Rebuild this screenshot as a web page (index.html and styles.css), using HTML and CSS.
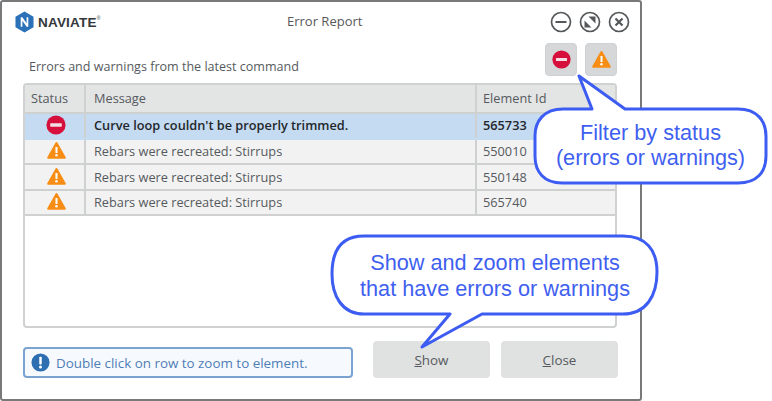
FILE: index.html
```html
<!DOCTYPE html>
<html lang="en">
<head>
<meta charset="utf-8">
<title>Error Report</title>
<link rel="stylesheet" href="styles.css">
</head>
<body>
<svg class="defs" width="0" height="0" aria-hidden="true">
  <symbol id="err" viewBox="0 0 20 20">
    <circle cx="10" cy="10" r="9.6" fill="#d60f3c"/>
    <rect x="4.2" y="8.3" width="11.6" height="3.4" rx=".6" fill="#f4dfe2"/>
  </symbol>
  <symbol id="warn" viewBox="0 0 20 18">
    <path d="M10 1.2 L18.8 16.6 H1.2 Z" fill="#f78d14" stroke="#f78d14" stroke-width="2.2" stroke-linejoin="round"/>
    <rect x="8.9" y="5.2" width="2.2" height="6.4" rx=".6" fill="#fff"/>
    <circle cx="10" cy="14" r="1.3" fill="#fff"/>
  </symbol>
</svg>
<main class="window">
  <header class="titlebar">
    <div class="logo">
      <svg class="logo-mark" viewBox="0 0 20 23" aria-hidden="true">
        <path d="M10 .5 19.5 6v11L10 22.5.5 17V6Z" fill="#2a71b8"/>
        <path d="M6 16.5v-10h1.8l4.4 6.4V6.500H14v10h-1.800L7.800 10.100v6.400Z" fill="#fff"/>
      </svg>
      <span class="logo-text">NAVIATE<sup class="reg">®</sup></span>
    </div>
    <h1 class="title">Error Report</h1>
    <div class="win-btns">
      <svg class="win-btn" viewBox="0 0 22 22" aria-hidden="true"><circle cx="11" cy="11" r="9.500"/><path d="M5.500 11h11" stroke-width="2"/></svg>
      <svg class="win-btn" viewBox="0 0 22 22" aria-hidden="true"><circle cx="11" cy="11" r="9.500"/><path d="M9.500 5.500h7v7ZM5.500 9.500l7 7h-7Z" class="solid"/></svg>
      <svg class="win-btn" viewBox="0 0 22 22" aria-hidden="true"><circle cx="11" cy="11" r="9.500"/><path d="M7.500 7.500l7 7M14.500 7.500l-7 7" stroke-width="2.200"/></svg>
    </div>
  </header>
  <div class="toolbar">
    <p class="lead">Errors and warnings from the latest command</p>
    <div class="filters">
      <button class="filter" type="button" aria-label="Errors"><svg class="filter-err"><use href="#err"/></svg></button>
      <button class="filter" type="button" aria-label="Warnings"><svg class="filter-warn"><use href="#warn"/></svg></button>
    </div>
  </div>
  <section class="table-box">
    <table class="grid">
      <colgroup><col class="c-status"><col class="c-msg"><col class="c-id"></colgroup>
      <thead>
        <tr><th>Status</th><th>Message</th><th>Element Id</th></tr>
      </thead>
      <tbody>
        <tr class="selected"><td class="ic"><svg class="row-err"><use href="#err"/></svg></td><td>Curve loop couldn't be properly trimmed.</td><td>565733</td></tr>
        <tr><td class="ic"><svg class="row-warn"><use href="#warn"/></svg></td><td>Rebars were recreated: Stirrups</td><td>550010</td></tr>
        <tr><td class="ic"><svg class="row-warn"><use href="#warn"/></svg></td><td>Rebars were recreated: Stirrups</td><td>550148</td></tr>
        <tr><td class="ic"><svg class="row-warn"><use href="#warn"/></svg></td><td>Rebars were recreated: Stirrups</td><td>565740</td></tr>
      </tbody>
    </table>
  </section>
  <footer class="footer">
    <div class="hint">
      <svg class="hint-icon" viewBox="0 0 20 20" aria-hidden="true"><circle cx="10" cy="10" r="9.500" fill="#2d6fb0"/><rect x="8.700" y="4" width="2.600" height="8" rx=".8" fill="#fff"/><circle cx="10" cy="14.800" r="1.600" fill="#fff"/></svg>
      <span>Double click on row to zoom to element.</span>
    </div>
    <button class="action" type="button"><u>S</u>how</button>
    <button class="action" type="button"><u>C</u>lose</button>
  </footer>
</main>

<aside class="callout callout-filter">
  <svg class="bubble" viewBox="0 0 240 112" aria-hidden="true">
    <path d="M31 35 H60 L47 2 L93 35 H206 C225 35 234 47 234 62 V82 C234 98 225 109 206 109 H30 C12 109 3 98 3 82 V62 C3 47 12 35 31 35 Z"/>
  </svg>
  <p class="callout-text">Filter by status<br>(errors or warnings)</p>
</aside>
<aside class="callout callout-show">
  <svg class="bubble" viewBox="0 0 330 116" aria-hidden="true">
    <path d="M34 2 H293 C316 2 327 16 327 38 C327 62 316 80 293 80 H152 L92 113 L120 80 H34 C12 80 2 62 2 40 C2 16 12 2 34 2 Z"/>
  </svg>
  <p class="callout-text">Show and zoom elements<br>that have errors or warnings</p>
</aside>
</body>
</html>
```
FILE: styles.css
```css
* { box-sizing: border-box; }
html, body { margin: 0; padding: 0; }
body {
  width: 772px;
  height: 401px;
  background: #fff;
  font-family: "Open Sans", "Noto Sans", sans-serif;
  overflow: hidden;
  position: relative;
}
.defs { position: absolute; }
.window {
  width: 642px;
  height: 401px;
  border: 2px solid #77797b;
  border-radius: 3px;
  background: #fff;
  padding: 0 23px 0 21px;
  display: flex;
  flex-direction: column;
}
.titlebar {
  height: 40px;
  margin: 0 -13px 0 -8px;
  display: flex;
  align-items: center;
  position: relative;
}
.logo { display: flex; align-items: center; gap: 4px; }
.logo-mark { width: 19px; height: 22px; }
.logo-text {
  font-family: "Liberation Sans", sans-serif;
  font-size: 13.5px;
  font-weight: 700;
  color: #33373b;
  letter-spacing: .2px;
}
.reg { font-size: 5px; font-weight: 400; line-height: 0; vertical-align: 7px; }
.title {
  position: absolute;
  left: 272px;
  top: 10px;
  margin: 0;
  font-size: 13px;
  font-weight: 400;
  line-height: 18px;
  color: #58595b;
}
.win-btns { margin-left: auto; display: flex; gap: 7px; }
.win-btn { width: 22px; height: 22px; fill: none; stroke: #55585a; stroke-width: 1.700; }
.win-btn .solid { fill: #55585a; stroke: none; }
.toolbar {
  height: 41px;
  display: flex;
  align-items: flex-end;
  justify-content: space-between;
  padding-left: 6px;
}
.lead { margin: 0 0 8px; font-size: 12.55px; line-height: 17px; color: #565a5e; }
.filters { display: flex; gap: 8px; margin-bottom: 7px; }
.filter {
  width: 32px;
  height: 33px;
  border: 1px solid #cfd1d2;
  border-radius: 4px;
  background: #d6d7d8;
  padding: 0;
  display: flex;
  align-items: center;
  justify-content: center;
}
.filter-err { width: 19px; height: 19px; }
.filter-warn { width: 19px; height: 17px; }
.table-box {
  height: 245px;
  border: 2px solid #d0d1d1;
  border-radius: 4px;
  background: #fff;
  overflow: hidden;
}
.grid { width: 100%; border-collapse: collapse; table-layout: fixed; font-size: 12.75px; }
.c-status { width: 60px; }
.c-msg { width: 391px; }
th, td {
  height: 25.5px;
  padding: 0 0 0 6px;
  text-align: left;
  font-weight: 400;
  color: #565a5e;
  border-right: 2px solid #cfd0d0;
  border-bottom: 2px solid #cfd0d0;
  white-space: nowrap;
}
th { height: 28px; padding-bottom: 2px; background: #e3e4e4; }
th:nth-child(2), td:nth-child(2) { padding-left: 8px; }
td { background: #f2f2f2; }
td:last-child, th:last-child { border-right: 0; }
.selected td { background: #c5dbf1; border-color: #c5dbf1; color: #23272b; font-weight: 600; padding-bottom: 2px; }
.selected td:not(:last-child) { border-right-color: #cfd0d0; }
td.ic, .selected td.ic { text-align: center; padding: 0 0 1px 3px; line-height: 0; }
.row-err { width: 20px; height: 20px; }
.row-warn { width: 19px; height: 17px; }
.footer {
  flex: 1;
  display: flex;
  align-items: flex-start;
  gap: 11px;
  margin-right: -1px;
  padding-top: 13px;
}
.hint {
  flex: none;
  width: 330px;
  height: 31px;
  margin-top: 6px;
  margin-right: 9px;
  border: 2px solid #7ba3cf;
  border-radius: 4px;
  background: #f6fafe;
  display: flex;
  align-items: center;
  gap: 6px;
  padding-left: 6px;
  color: #4f7db6;
  font-size: 13.4px;
}
.hint-icon { flex: none; width: 19px; height: 19px; }
.action {
  flex: none;
  width: 117px;
  height: 37px;
  border: 0;
  border-radius: 4px;
  background: #e0e1e1;
  color: #565a5e;
  font: 13.4px "Open Sans", "Noto Sans", sans-serif;
}
.callout { position: absolute; margin: 0; display: flex; align-items: flex-end; justify-content: center; }
.callout-filter { left: 532px; top: 74px; width: 240px; height: 112px; padding: 0 3px 16px 0; }
.callout-show { left: 330px; top: 234px; width: 330px; height: 116px; padding-bottom: 48px; }
.callout-filter .callout-text { line-height: 25px; }
.bubble { position: absolute; inset: 0; width: 100%; height: 100%; }
.bubble path { fill: #fff; stroke: #3c5cf2; stroke-width: 3; stroke-linejoin: round; }
.callout-text {
  position: relative;
  margin: 0;
  text-align: center;
  font-family: "Liberation Sans", sans-serif;
  font-size: 21.7px;
  line-height: 26px;
  color: #3f5ff0;
}
```
